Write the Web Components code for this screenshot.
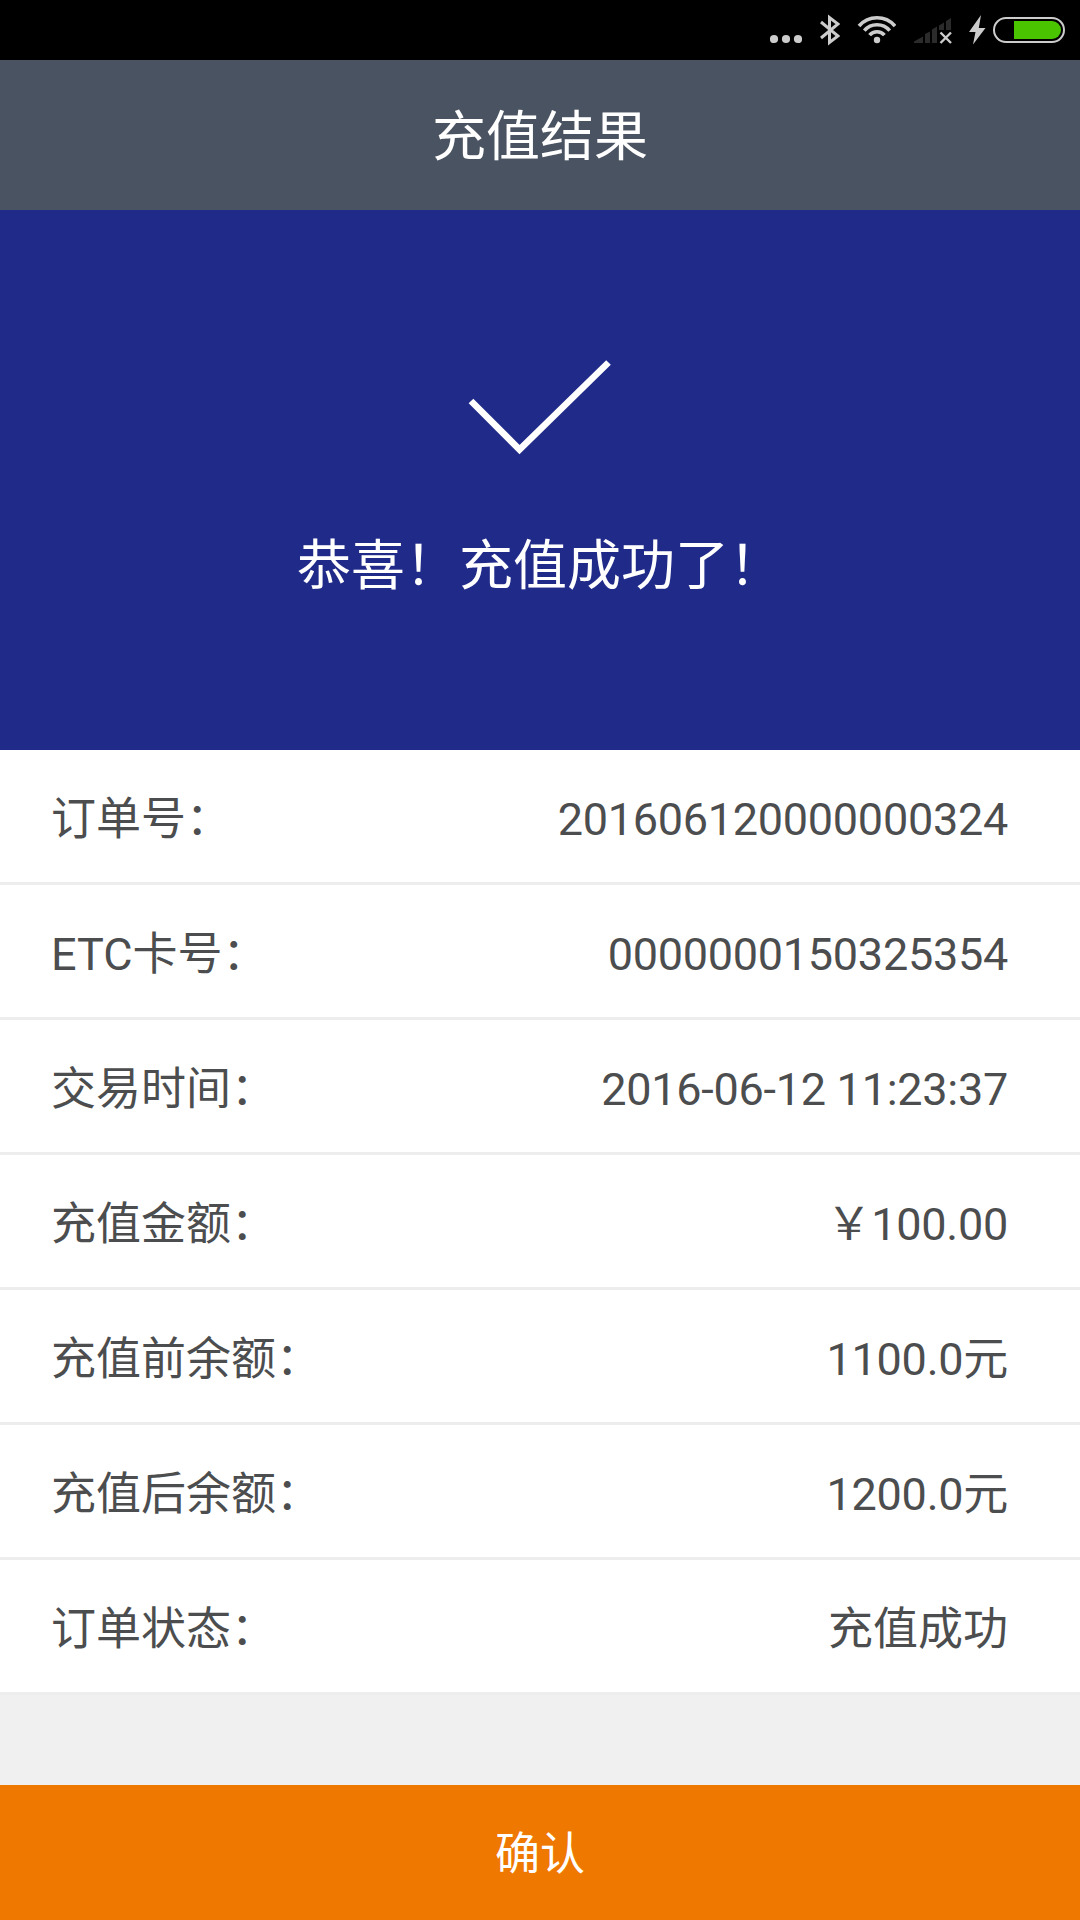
<!DOCTYPE html>
<html lang="zh-CN">
<head>
<meta charset="utf-8">
<title>充值结果</title>
<style>
  body {
    margin: 0;
    background: #f0f0f0;
    font-family: Roboto, "Noto Sans CJK SC", sans-serif;
  }
</style>
</head>
<body>
<result-page>
  <status-bar></status-bar>
  <title-bar>充值结果</title-bar>
  <result-banner>恭喜！充值成功了！</result-banner>
  <detail-row label="订单号：" numeric>201606120000000324</detail-row>
  <detail-row label="ETC卡号：" numeric>0000000150325354</detail-row>
  <detail-row label="交易时间：" numeric>2016-06-12 11:23:37</detail-row>
  <detail-row label="充值金额：" numeric>￥100.00</detail-row>
  <detail-row label="充值前余额：" numeric>1100.0元</detail-row>
  <detail-row label="充值后余额：" numeric>1200.0元</detail-row>
  <detail-row label="订单状态：">充值成功</detail-row>
  <confirm-button slot="footer">确认</confirm-button>
</result-page>

<script>
class ResultPage extends HTMLElement {
  constructor() {
    super();
    this._root = this.attachShadow({ mode: 'open' });
    this._root.innerHTML = `
      <style>
        :host {
          display: flex;
          flex-direction: column;
          width: 1080px;
          height: 1920px;
          overflow: hidden;
        }
        main {
          flex: 1;
        }
      </style>
      <main><slot></slot></main>
      <slot name="footer"></slot>
    `;
  }
}

class StatusBar extends HTMLElement {
  constructor() {
    super();
    this._root = this.attachShadow({ mode: 'open' });
    // every icon is as tall as the bar, its viewBox starts at the icon's own x
    this._root.innerHTML = `
      <style>
        :host {
          display: flex;
          justify-content: flex-end;
          height: 60px;
          padding-right: 14px;
          background: #000;
          color: #ccc;
        }
        svg {
          display: block;
          height: 60px;
          fill: currentColor;
        }
        .line {
          fill: none;
          stroke: currentColor;
        }
        .more { margin-right: 18px; }
        .bluetooth { margin-right: 17px; }
        .wifi { margin-right: 17px; }
        .signal { margin-right: 17px; }
        .bolt { margin-right: 7px; }
      </style>
      <svg class="more" width="32" viewBox="770 0 32 60">
        <circle cx="774" cy="39" r="4.1"/>
        <circle cx="786" cy="39" r="4.1"/>
        <circle cx="798" cy="39" r="4.1"/>
      </svg>
      <svg class="bluetooth" width="20" viewBox="820 0 20 60">
        <path class="line" stroke-width="3" d="M821 22 L838 36 L829.5 42.5 V17.5 L838 24 L821 38"/>
      </svg>
      <svg class="wifi" width="39" viewBox="857 0 39 60">
        <circle cx="877" cy="40" r="3.2"/>
        <g class="line" stroke-width="3.6">
          <path d="M869.6 35.2 A9.6 9.6 0 0 1 884.4 35.2"/>
          <path d="M864.3 30.6 A16.8 16.8 0 0 1 889.7 30.6"/>
          <path d="M859 26 A23.7 23.7 0 0 1 895 26"/>
        </g>
      </svg>
      <svg class="signal" width="39" viewBox="913 0 39 60">
        <path fill="#2b2b2b" d="M914 43 V41.5 L923 36.5 V43 Z M925 43 V34 L930 31.5 V43 Z M932 43 V29.5 L937 26.5 V43 Z M939 30 V25.5 L944 22.5 V30 Z M946 30 V21 L951 18 V30 Z"/>
        <path class="line" stroke-width="2.4" d="M940.5 32.5 L951 43 M951 32.5 L940.5 43"/>
      </svg>
      <svg class="bolt" width="17" viewBox="969 0 17 60">
        <path d="M981 15 L969 32 H975.5 L973 44.5 L985.5 28 H978.8 Z"/>
      </svg>
      <svg class="battery" width="73" viewBox="993 0 73 60">
        <rect class="line" x="994" y="18" width="70" height="24" rx="12" stroke-width="2"/>
        <path fill="#4bc400" d="M1014 21 H1052 A9 9 0 0 1 1052 39 H1014 Z"/>
      </svg>
    `;
  }
}

class TitleBar extends HTMLElement {
  constructor() {
    super();
    this._root = this.attachShadow({ mode: 'open' });
    this._root.innerHTML = `
      <style>
        :host {
          display: flex;
          align-items: center;
          justify-content: center;
          box-sizing: border-box;
          height: 150px;
          padding-top: 6px;
          background: #4a5361;
          color: #fff;
          font-size: 54px;
          line-height: 80px;
        }
      </style>
      <slot></slot>
    `;
  }
}

class ResultBanner extends HTMLElement {
  constructor() {
    super();
    this._root = this.attachShadow({ mode: 'open' });
    this._root.innerHTML = `
      <style>
        :host {
          display: flex;
          flex-direction: column;
          align-items: center;
          box-sizing: border-box;
          height: 540px;
          padding-top: 140px;
          background: #202a88;
          color: #fff;
          font-size: 54px;
          line-height: 80px;
        }
        svg {
          display: block;
          margin-bottom: 57px;
        }
      </style>
      <svg width="180" height="120" viewBox="0 0 180 120">
        <path fill="none" stroke="#fff" stroke-width="6.6" d="M21 51 L69.5 99.5 L158.5 12.5"/>
      </svg>
      <div><slot></slot></div>
    `;
  }
}

class DetailRow extends HTMLElement {
  constructor() {
    super();
    const label = this.getAttribute('label');
    this._root = this.attachShadow({ mode: 'open' });
    this._root.innerHTML = `
      <style>
        :host {
          display: flex;
          align-items: center;
          justify-content: space-between;
          box-sizing: border-box;
          height: 135px;
          padding: 8px 72px 0 51px;
          border-bottom: 3px solid #ededed;
          background: #fff;
          color: #4c4d4e;
          font-size: 45px;
          line-height: 66px;
        }
        :host([numeric]) .value {
          letter-spacing: -0.27px;
        }
      </style>
      <span class="label">${label}</span>
      <span class="value"><slot></slot></span>
    `;
  }
}

class ConfirmButton extends HTMLElement {
  constructor() {
    super();
    this._root = this.attachShadow({ mode: 'open' });
    this._root.innerHTML = `
      <style>
        :host {
          display: block;
        }
        button {
          display: block;
          width: 100%;
          height: 135px;
          padding: 5px 0 0;
          border: 0;
          background: #ee7800;
          color: #fff;
          font: inherit;
          font-size: 45px;
          line-height: 66px;
        }
      </style>
      <button type="button"><slot></slot></button>
    `;
  }
}

window.customElements.define('result-page', ResultPage);
window.customElements.define('status-bar', StatusBar);
window.customElements.define('title-bar', TitleBar);
window.customElements.define('result-banner', ResultBanner);
window.customElements.define('detail-row', DetailRow);
window.customElements.define('confirm-button', ConfirmButton);
</script>
</body>
</html>
